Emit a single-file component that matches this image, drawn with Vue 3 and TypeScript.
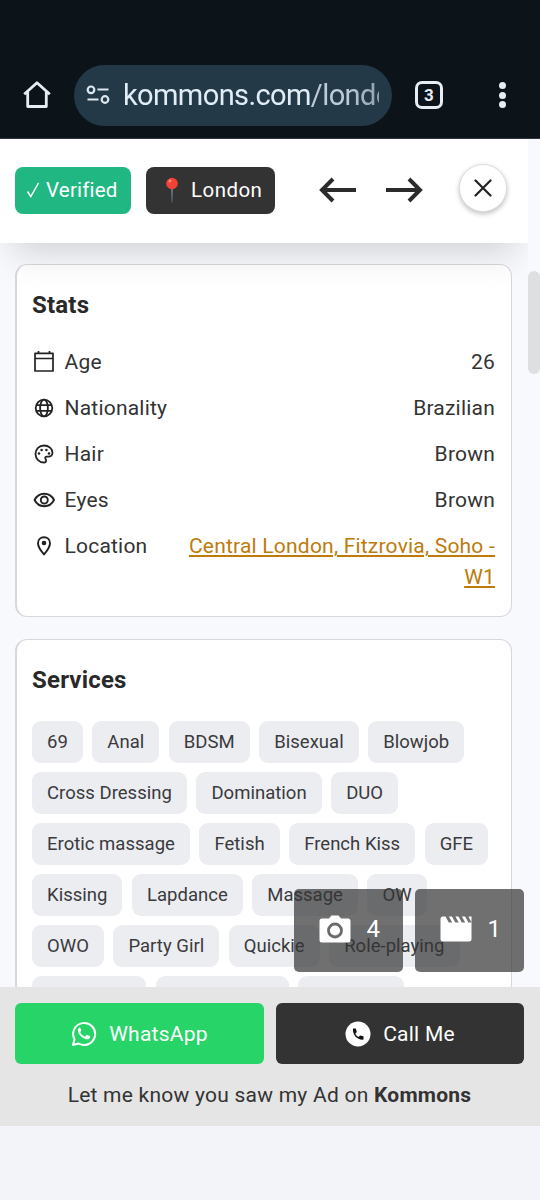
<script setup lang="ts">
interface Stat {
  label: string
  value: string
  icon: 'calendar' | 'globe' | 'palette' | 'eye' | 'pin'
  link?: boolean
}

const stats: Stat[] = [
  { label: 'Age', value: '26', icon: 'calendar' },
  { label: 'Nationality', value: 'Brazilian', icon: 'globe' },
  { label: 'Hair', value: 'Brown', icon: 'palette' },
  { label: 'Eyes', value: 'Brown', icon: 'eye' },
  { label: 'Location', value: 'Central London, Fitzrovia, Soho - W1', icon: 'pin', link: true },
]

const services: string[][] = [
  ['69', 'Anal', 'BDSM', 'Bisexual', 'Blowjob'],
  ['Cross Dressing', 'Domination', 'DUO'],
  ['Erotic massage', 'Fetish', 'French Kiss', 'GFE'],
  ['Kissing', 'Lapdance', 'Massage', 'OW'],
  ['OWO', 'Party Girl', 'Quickie', 'Role-playing'],
]

// Widths of the chips cut off by the contact bar
const hiddenChips: number[] = [114, 133, 106]
</script>

<template>
  <div class="screen">
    <header class="browser">
      <svg class="home" viewBox="0 0 30 30" width="30" height="30">
        <path d="M2.200 14.200 15 2.800l12.800 11.400M5.700 12v14.500h18.600V12" fill="none" stroke="#e6edf4" stroke-width="2.800" stroke-linejoin="round" />
      </svg>
      <div class="url">
        <svg class="tune" viewBox="0 0 24 20" width="24" height="20" fill="none" stroke="#dce7f0" stroke-width="2.200">
          <circle cx="5" cy="4.800" r="3.300" /><path d="M11.500 4.500H22.500M1.500 14.500h11" /><circle cx="19" cy="14.500" r="3.300" />
        </svg>
        <div class="address">kommons.com<span>/london</span></div>
      </div>
      <div class="tabs">3</div>
      <div class="dots"><i></i><i></i><i></i></div>
    </header>

    <main class="page">
      <div class="topbar">
        <div class="badge verified">
          <svg viewBox="0 0 14 18" width="14" height="18"><path d="M1.500 10.500 4.800 15.500 12.500 2" fill="none" stroke="#fff" stroke-width="1.500" /></svg>
          <span>Verified</span>
        </div>
        <div class="badge city">
          <svg viewBox="0 0 14 26" width="14" height="26">
            <path d="M6.100 10h1.800L7.300 25.500h-.6z" fill="#708794" />
            <circle cx="7" cy="6.500" r="5.800" fill="#f44336" />
            <ellipse cx="5" cy="4" rx="1.700" ry="1.200" fill="#ff8a80" transform="rotate(-35 5 4)" />
          </svg>
          <span>London</span>
        </div>
        <svg class="arrow left" viewBox="0 0 38 26" width="38" height="26"><path d="M37 13H3M14 2 3 13l11 11" fill="none" stroke="#2b2b2b" stroke-width="4" /></svg>
        <svg class="arrow right" viewBox="0 0 38 26" width="38" height="26"><path d="M1 13h34M24 2l11 11-11 11" fill="none" stroke="#2b2b2b" stroke-width="4" /></svg>
        <div class="close">
          <svg viewBox="0 0 18 18" width="18" height="18"><path d="m1.500 1.500 15 15m0-15-15 15" stroke="#222" stroke-width="2.200" stroke-linecap="round" /></svg>
        </div>
      </div>

      <section class="card stats">
        <h2>Stats</h2>
        <div v-for="s in stats" :key="s.label" class="stat">
          <svg class="ico" viewBox="0 0 24 24" width="24" height="24">
            <path v-if="s.icon === 'calendar'" d="M3 3.300h18v17.700H3zM3 8.500h18M6.500 1v3M17.500 1v3" fill="none" stroke="#222" stroke-width="1.700" stroke-linejoin="round" />
            <g v-else-if="s.icon === 'globe'" fill="none" stroke="#222" stroke-width="1.800">
              <circle cx="12" cy="12" r="8.300" /><ellipse cx="12" cy="12" rx="3.900" ry="8.300" /><path d="M4.200 9.200h15.600M4.200 14.800h15.600" />
            </g>
            <g v-else-if="s.icon === 'palette'">
              <path d="M12 3.500c-4.800 0-8.500 3.700-8.500 8.500s3.900 8.500 8.500 8.500c1.300 0 2.100-1 2.100-2.100 0-1.300-.9-1.500-.9-2.400 0-.8.700-1.300 1.500-1.300h1.800c2.300 0 4-1.700 4-3.900 0-4-3.700-7.300-8.500-7.300z" fill="none" stroke="#222" stroke-width="1.800" />
              <g fill="#222"><circle cx="7" cy="11.500" r="1.300" /><circle cx="9.600" cy="8" r="1.300" /><circle cx="14.400" cy="8" r="1.300" /><circle cx="17" cy="11.500" r="1.300" /></g>
            </g>
            <g v-else-if="s.icon === 'eye'" fill="none" stroke="#222" stroke-width="1.900">
              <path d="M2.600 12C4.600 8 8 5.800 12.300 5.800S20 8 22 12c-2 4-5.400 6.200-9.700 6.200S4.600 16 2.600 12z" /><circle cx="12.300" cy="12" r="3.500" />
            </g>
            <g v-else>
              <path d="M12 3.200c-3.500 0-6 2.500-6 6C6 13.500 12 20.300 12 20.300s6-6.800 6-11.100c0-3.500-2.500-6-6-6z" fill="none" stroke="#222" stroke-width="1.900" /><circle cx="12" cy="9" r="2.300" fill="#222" />
            </g>
          </svg>
          <span class="label">{{ s.label }}</span>
          <a v-if="s.link" class="value link">{{ s.value }}</a>
          <span v-else class="value">{{ s.value }}</span>
        </div>
      </section>

      <section class="card services">
        <h2>Services</h2>
        <div class="rows">
          <div v-for="(row, i) in services" :key="i" class="row">
            <span v-for="name in row" :key="name" class="chip">{{ name }}</span>
          </div>
          <div class="row">
            <span v-for="w in hiddenChips" :key="w" class="chip" :style="{ width: w + 'px' }"></span>
          </div>
        </div>
      </section>

      <div class="scrollbar"></div>
      <div class="media">
        <div class="count">
          <svg class="camera" viewBox="0 0 32 28" width="32" height="28">
            <path d="M3 3.500h7L12.500.5h7L22 3.500h7a2.500 2.500 0 0 1 2.500 2.500v19a2.500 2.500 0 0 1-2.500 2.500H3A2.500 2.500 0 0 1 .5 25V6A2.500 2.500 0 0 1 3 3.500z" fill="#fff" />
            <circle cx="16" cy="15.500" r="6.500" fill="#fff" stroke="#6b6b6b" stroke-width="2.800" />
          </svg>
          <span>4</span>
        </div>
        <div class="count">
          <svg class="clapper" viewBox="0 0 32 26" width="32" height="26">
            <path d="M.5 3A2.500 2.500 0 0 1 3 .5h2.500l3.300 6h3.400L8.900.5H12l3.300 6h3.400L15.400.5h3.100l3.300 6h3.400L21.900.5h3.200l3.300 6h3.100L28.500.5h3V23a2.500 2.500 0 0 1-2.500 2.500H3A2.500 2.500 0 0 1 .5 23z" fill="#fff" />
          </svg>
          <span>1</span>
        </div>
      </div>
    </main>

    <footer class="contact">
      <div class="buttons">
        <div class="btn whatsapp">
          <svg viewBox="0 0 26 26" width="26" height="26">
            <path d="M2 24l1.500-5.700A11 11 0 1 1 7.600 22.500z" fill="none" stroke="#fff" stroke-width="2" stroke-linejoin="round" />
            <path d="M9.300 7c-.5-.4-1.200-.3-1.600.2-2.600 2.900 1.300 7.400 3.800 9.300 2.200 1.600 5.500 3 7.300.5.600-.9.500-1.600-.1-1.900l-2.400-1.200c-.5-.2-.8-.1-1.100.3l-.9 1.100c-.3.300-.6.300-1 .1-1.900-.9-3.100-2.200-4-3.800-.2-.4-.1-.6.200-.9l.7-.9c.2-.3.200-.6.100-.9z" fill="#fff" />
          </svg>
          <span>WhatsApp</span>
        </div>
        <div class="btn call">
          <svg viewBox="0 0 26 26" width="26" height="26">
            <circle cx="13" cy="13" r="12.500" fill="#fff" />
            <path d="M8 7.500h2.800l1 3.600-1.600 1.600c.8 1.500 1.900 2.600 3.300 3.300l1.600-1.600 3.400.9v3.300C12.400 19.200 7.300 14 8 7.500z" fill="#111" />
          </svg>
          <span>Call Me</span>
        </div>
      </div>
      <p>Let me know you saw my Ad on <b>Kommons</b></p>
    </footer>
  </div>
</template>

<style>
body { margin: 0; background: #f2f4f9; }
</style>

<style scoped>
* { box-sizing: border-box; }
.screen { width: 540px; height: 1200px; overflow: hidden; display: flex; flex-direction: column; background: #f2f4f9; font-family: Roboto, "Liberation Sans", sans-serif; color: #333; }
svg { display: block; flex: none; }

.browser { flex: none; height: 139px; padding: 52px 0 0 22px; display: flex; align-items: center; background: #0c1319; border-bottom: 1px solid #30363b; }
.url { width: 318px; height: 61px; margin-left: 22px; padding: 0 13px 0 12px; display: flex; align-items: center; gap: 13px; border-radius: 31px; background: #243947; }
.address { flex: 1; overflow: hidden; white-space: nowrap; font-size: 29px; line-height: 40px; letter-spacing: -0.600px; color: #e1edf6; -webkit-mask-image: linear-gradient(90deg, #000 88%, rgba(0, 0, 0, 0.7)); }
.address span { color: #bccbd6; }
.tabs { width: 28px; height: 28px; margin-left: 23px; border: 3px solid #e6edf4; border-radius: 7px; font-size: 17px; line-height: 23px; font-weight: 700; text-align: center; color: #e6edf4; }
.dots { width: 7px; margin-left: 56px; display: grid; gap: 2.500px; }
.dots i { width: 7px; height: 7px; border-radius: 50%; background: #e6edf4; }

.page { position: relative; flex: none; height: 848px; overflow: hidden; background: #f8f9fc; }
.topbar { position: relative; z-index: 1; width: 528px; height: 104px; padding: 0 0 2px 15px; display: flex; align-items: center; background: #fff; box-shadow: 0 20px 36px -12px rgba(0, 0, 0, 0.17); clip-path: inset(0 0 -80px 0); }
.badge { height: 47px; display: flex; align-items: center; border-radius: 8px; color: #fff; font-size: 20.500px; letter-spacing: 0.200px; }
.verified { width: 116px; padding-left: 11px; gap: 6px; background: #20b783; }
.city { width: 129px; margin-left: 15px; padding-left: 19px; gap: 12px; letter-spacing: 0.450px; background: #333; }
.arrow.left { margin-left: 44px; }
.arrow.right { margin-left: 28px; }
.close { width: 48px; height: 48px; margin: -4px 0 0 36px; display: grid; place-items: center; border: 1px solid #ddd; border-radius: 50%; background: #fff; box-shadow: 0 2px 5px rgba(0, 0, 0, 0.25); }

.card { width: 497px; margin-left: 15px; border: 1px solid #d6d8db; border-left-width: 2px; border-radius: 12px; background: #fff; padding: 0 16px 0 15px; }
.stats { height: 353px; margin-top: 21px; }
.services { height: 420px; margin-top: 22px; }
h2 { margin: 0; padding-top: 25px; font-size: 24px; line-height: 30px; font-weight: 700; letter-spacing: 0.200px; color: #292929; }
.stat { display: flex; align-items: flex-start; margin-bottom: 15.100px; font-size: 21px; line-height: 31px; letter-spacing: 0.210px; }
.stats h2 { margin-bottom: 27px; }
.ico { margin-top: 3px; }
.label { margin-left: 8.500px; }
.value { margin-left: auto; max-width: 320px; text-align: right; }
.link { color: #be7b0b; text-decoration: underline; text-decoration-thickness: 2px; text-underline-offset: 2px; }
.rows { display: grid; gap: 9.500px; margin-top: 26px; }
.row { display: flex; gap: 9.500px; }
.chip { flex: none; height: 41.500px; padding: 0 15px; border-radius: 9px; background: #ecedf1; font-size: 18.500px; line-height: 42px; letter-spacing: 0.020px; white-space: nowrap; color: #3a3a3d; }

.scrollbar { position: absolute; right: 0; top: 132px; width: 12px; height: 103px; border-radius: 6px; background: #dedfe1; }
.media { position: absolute; right: 16px; bottom: 15px; display: flex; gap: 12px; }
.count { width: 109px; height: 83px; padding: 0 23px 3px 25px; display: flex; align-items: center; justify-content: space-between; border-radius: 5px; background: rgba(51, 51, 51, 0.7); color: #fff; font-size: 24px; }

.contact { flex: none; height: 139px; padding: 16px 16px 0 15px; background: #e5e5e5; }
.buttons { display: grid; grid-template-columns: 249px 248px; gap: 12px; }
.btn { height: 61px; display: flex; align-items: center; justify-content: center; gap: 12px; border-radius: 6px; color: #fff; font-size: 21px; letter-spacing: 0.250px; }
.whatsapp { background: #27d467; }
.call { background: #333; }
p { margin: 17px 0 0; text-align: center; font-size: 21px; line-height: 28px; letter-spacing: 0.240px; }
</style>
